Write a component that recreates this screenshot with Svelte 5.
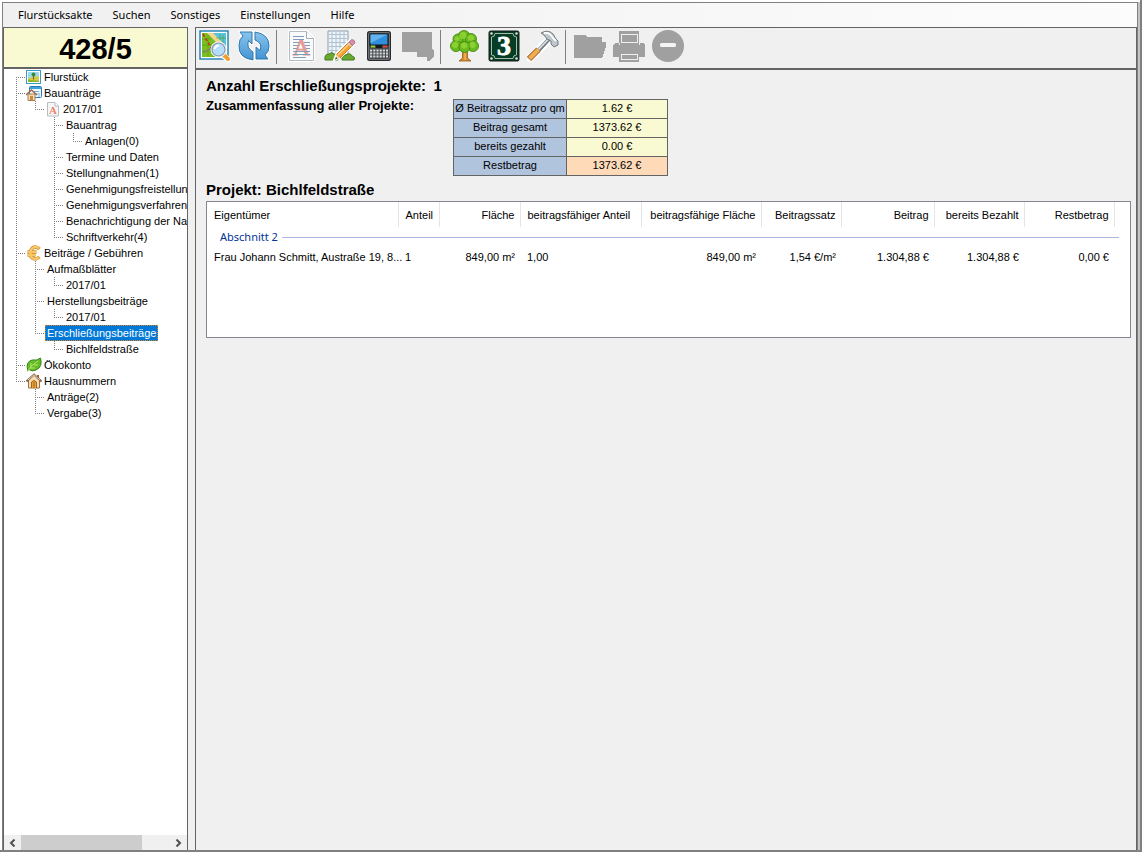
<script>
  const menu = ['Flurstücksakte', 'Suchen', 'Sonstiges', 'Einstellungen', 'Hilfe'];

  const tools = [
    [['map', 'Karte'], ['refresh', 'Aktualisieren']],
    [['doc', 'Dokument'], ['edit', 'Bearbeiten'], ['phone', 'Rechner'], ['note', 'Notiz', true]],
    [['tree', 'Ökokonto'], ['three', 'Hausnummer'], ['hammer', 'Werkzeug']],
    [['folder', 'Ordner', true], ['printer', 'Drucken', true], ['minus', 'Entfernen', true]]
  ];

  // Guides, one letter per level: "|" passes through, "t" branches, "l" ends, "-" is empty, "r" is the first root
  const nodes = [
    { g: 'r', text: 'Flurstück', icon: 'picture' },
    { g: 't', text: 'Bauanträge', icon: 'site' },
    { g: '|l', text: '2017/01', icon: 'page' },
    { g: '|-t', text: 'Bauantrag' },
    { g: '|-|l', text: 'Anlagen(0)' },
    { g: '|-t', text: 'Termine und Daten' },
    { g: '|-t', text: 'Stellungnahmen(1)' },
    { g: '|-t', text: 'Genehmigungsfreistellung' },
    { g: '|-t', text: 'Genehmigungsverfahren(1)' },
    { g: '|-t', text: 'Benachrichtigung der Nachbarn' },
    { g: '|-l', text: 'Schriftverkehr(4)' },
    { g: 't', text: 'Beiträge / Gebühren', icon: 'euro' },
    { g: '|t', text: 'Aufmaßblätter' },
    { g: '||l', text: '2017/01' },
    { g: '|t', text: 'Herstellungsbeiträge' },
    { g: '||l', text: '2017/01' },
    { g: '|l', text: 'Erschließungsbeiträge' },
    { g: '|-l', text: 'Bichlfeldstraße' },
    { g: 't', text: 'Ökokonto', icon: 'leaf' },
    { g: 'l', text: 'Hausnummern', icon: 'house' },
    { g: '-t', text: 'Anträge(2)' },
    { g: '-l', text: 'Vergabe(3)' }
  ];
  let selected = $state(16);

  const guide = {
    '|': 'M.5 0V16',
    t: 'M.5 0V16M0 8.5H10',
    l: 'M.5 0V8M0 8.5H10',
    r: 'M.5 8V16M0 8.5H10',
    '-': ''
  };

  const summary = [
    ['Ø Beitragssatz pro qm', '1.62 €'],
    ['Beitrag gesamt', '1373.62 €'],
    ['bereits gezahlt', '0.00 €'],
    ['Restbetrag', '1373.62 €']
  ];

  const columns = [
    ['Eigentümer', 191], ['Anteil', 41], ['Fläche', 81, true], ['beitragsfähiger Anteil', 121],
    ['beitragsfähige Fläche', 120, true], ['Beitragssatz', 80, true], ['Beitrag', 93, true],
    ['bereits Bezahlt', 90, true], ['Restbetrag', 90, true]
  ];
  const row = ['Frau Johann Schmitt, Austraße 19, 8...', '1', '849,00 m²', '1,00', '849,00 m²', '1,54 €/m²', '1.304,88 €', '1.304,88 €', '0,00 €'];
</script>

{#snippet toolIcon(name)}
  <svg width="32" height="32" viewBox="0 0 32 32" aria-hidden="true">
    {#if name === 'map'}
      <rect x="1" y="1" width="28" height="28" fill="#fff" stroke="#1b7fb5" stroke-width="1.4" />
      <rect x="3" y="3" width="24" height="24" fill="#7bbf1e" />
      <path d="M13 3H27V20L22 14Z" fill="#55c4dc" />
      <path d="M8 3H14L27 16V22Z" fill="#f3d58f" />
      <path d="M3 9H12M3 15H18M3 21H20M9 5V27M15 12V27M21 4V10M17 8H27M24 5V14" stroke="#4d9a1a" stroke-width=".8" opacity=".7" />
      <path d="M4 4L13 19" stroke="#d22" stroke-width="1.6" stroke-dasharray="3 2" />
      <path d="M4 23L14 17" stroke="#8b7b88" stroke-width="1.2" />
      <path d="M25 26L30 30" stroke="#fff" stroke-width="6" stroke-linecap="round" />
      <path d="M23 24L26 27" stroke="#778" stroke-width="2.5" />
      <path d="M26 26L29 29" stroke="#f0a030" stroke-width="4" stroke-linecap="round" />
      <circle cx="19.500" cy="19.500" r="6.500" fill="#bfe3fa" stroke="#f4f8fb" stroke-width="3" />
      <circle cx="19.500" cy="19.500" r="6.500" fill="#b5dcf8" stroke="#8597a8" stroke-width="1.2" />
      <path d="M15.500 19Q16.500 15.500 20 15.500" fill="none" stroke="#fff" stroke-width="2" />
    {:else if name === 'refresh'}
      <defs>
        <linearGradient id="blue" x2="0" y2="1"><stop stop-color="#89c5ec" /><stop offset="1" stop-color="#4494d3" /></linearGradient>
      </defs>
      <g stroke="#fff" stroke-width="3" stroke-linejoin="round">
        <path d="M2 2H14V14L10.500 10.500Q8 18 15 22V30Q0 28 1 15Q1 9 5 6Z" />
        <path d="M17 2Q31 4 31 16Q31 22 27 25L30 29H18V17L22 20.500Q25 13 17 10Z" />
      </g>
      <g fill="url(#blue)" stroke="#2f78b0" stroke-width="1" stroke-linejoin="round">
        <path d="M2 2H14V14L10.500 10.500Q8 18 15 22V30Q0 28 1 15Q1 9 5 6Z" />
        <path d="M17 2Q31 4 31 16Q31 22 27 25L30 29H18V17L22 20.500Q25 13 17 10Z" />
      </g>
    {:else if name === 'doc'}
      <path d="M4 1H22L29 8V31H4Z" fill="#fff" stroke="#fff" stroke-width="2" />
      <path d="M4.500 1.500H21.500L28.500 8.500V30.500H4.500Z" fill="#f8fafb" stroke="#b4bcc2" />
      <path d="M21.500 1.500V8.500H28.500" fill="#fff" stroke="#a4afb7" />
      <text x="16.500" y="25" text-anchor="middle" font-family="Liberation Serif, serif" font-size="24" fill="#e59a94" stroke="#e59a94" stroke-width=".8">A</text>
      <path d="M8 6.500H19M8 9.500H19M8 12.500H14M19 12.500H25M8 15.500H13M20 15.500H25M8 18.500H12M21 18.500H25M8 21.500H25M8 24.500H25M8 27.500H21" stroke="#7f9cb8" stroke-width="1.2" />
    {:else if name === 'edit'}
      <path d="M4 1H24V28H4Z" fill="#edf3f7" stroke="#8d9faf" />
      <path d="M8 2V27M12 2V27M16 2V27M20 2V27M5 4.500H23M5 8.500H23M5 12.500H23M5 16.500H23M5 20.500H23M5 24.500H23" stroke="#a9bdcb" stroke-width=".9" />
      <path d="M1 30Q0 24 5 24Q8 21 10 24Q14 24 14 30ZM18 30Q18 25 22 25Q26 22 28 26Q32 27 30 30Z" fill="#69a931" stroke="#457b1c" />
      <path d="M10 30L12.500 23.500L26 10L30 14L16.500 27.500Z" fill="#fff" stroke="#fff" stroke-width="2" />
      <path d="M12.500 24.500L25 12L28.500 15.500L16 28Z" fill="#f7a12c" stroke="#b96d16" stroke-width=".8" />
      <path d="M14 25L26 13" stroke="#ffd58d" stroke-width="1.3" />
      <path d="M12.500 24.500L11 29.500L16 28Z" fill="#f7dfb2" /><path d="M11 29.500L12 27L13.500 28.500Z" fill="#333" />
      <path d="M25 12L27.500 9.500Q31 9.500 31 13L28.500 15.500Z" fill="#dc8aac" stroke="#a46783" stroke-width=".7" />
      <path d="M24 13L27.500 16.500" stroke="#c8cbd0" stroke-width="1.3" />
    {:else if name === 'phone'}
      <rect x="4" y="1" width="24" height="30" rx="2.500" fill="#27292c" />
      <rect x="5.500" y="2.500" width="21" height="27" rx="1.500" fill="#484b4e" stroke="#96999b" stroke-width=".6" />
      <rect x="7" y="4" width="18" height="11" fill="#2f8fdc" stroke="#111" />
      <path d="M7.500 4.500H24.500L7.500 13Z" fill="#62b2ee" />
      <path d="M8 16.500H12" stroke="#8bd321" stroke-width="2" /><path d="M20 16.500H24" stroke="#ef3d31" stroke-width="2" />
      <rect x="13" y="15" width="6" height="3" fill="#15181b" />
      <path d="M7 20.500H25M7 23.500H25M7 26.500H25" stroke="#d5d6d7" stroke-width="1.800" stroke-dasharray="2.200 1" />
    {:else if name === 'note'}
      <path d="M0 2H30V19L32 21V26L27 31H25V27H15V22H0Z" fill="#a0a0a0" shape-rendering="crispEdges" />
    {:else if name === 'tree'}
      <path d="M10 31L13.500 28V20L9 15H23L18.500 20V28L22 31Z" fill="#d88b2c" stroke="#9b5917" stroke-width=".8" />
      <path d="M16 30V20M16 23L12 18M16 22L20 18" stroke="#ffc870" stroke-width="1" />
      <g fill="#6abb20" stroke="#45890f" stroke-width=".9">
        <circle cx="15" cy="6.500" r="6" /><circle cx="9" cy="9" r="5" /><circle cx="22" cy="9" r="5.500" />
        <circle cx="7" cy="16" r="5.500" /><circle cx="24" cy="16" r="5.500" /><circle cx="15.500" cy="17" r="5.500" />
      </g>
      <g fill="#99d839" opacity=".75"><circle cx="14" cy="5.500" r="3.500" /><circle cx="8" cy="9" r="2.500" /><circle cx="22" cy="8" r="3" /><circle cx="6" cy="15" r="3" /><circle cx="15" cy="15.500" r="3" /><circle cx="23.500" cy="15" r="3" /></g>
    {:else if name === 'three'}
      <rect x="1" y="1" width="30" height="30" rx="1.500" fill="#073d25" stroke="#171d18" />
      <path d="M7 3.500H25M28.500 7V25M25 28.500H7M3.500 25V7M3.500 7Q7 7 7 3.500M25 3.500Q25 7 28.500 7M28.500 25Q25 25 25 28.500M7 28.500Q7 25 3.500 25" fill="none" stroke="#b5c9ba" stroke-width=".9" />
      <g fill="#deddd1"><circle cx="3.500" cy="3.500" r="1.300" /><circle cx="28.500" cy="3.500" r="1.300" /><circle cx="3.500" cy="28.500" r="1.300" /><circle cx="28.500" cy="28.500" r="1.300" /></g>
      <text x="16" y="25" text-anchor="middle" font-family="Liberation Serif, serif" font-size="28" font-weight="bold" fill="#fff" stroke="#fff" stroke-width=".8">3</text>
    {:else if name === 'hammer'}
      <path d="M3 28L22 10" stroke="#fff" stroke-width="8" stroke-linecap="round" />
      <path d="M11 21L23 8" stroke="#70777d" stroke-width="4" />
      <path d="M11 20L23 7.500" stroke="#dce3e8" stroke-width="1.800" />
      <path d="M2 29L11.500 19.500" stroke="#a45b18" stroke-width="6" />
      <path d="M2.500 28.500L11.500 19.500" stroke="#efad58" stroke-width="4" />
      <path d="M14 3Q21 -1 26 4L29 9L31 11V15L27 17L24 14V11L20 9Q17 4 14 3Z" fill="#bdc7ce" stroke="#707980" />
      <path d="M17 3Q23 2 26 8L29 11" fill="none" stroke="#fff" stroke-width="1.800" />
    {:else if name === 'folder'}
      <path d="M0 5H11L13 7H28V12H32V17L28 28H0Z" fill="#a0a0a0" shape-rendering="crispEdges" />
    {:else if name === 'printer'}
      <path d="M6 1H26V13H30L32 15V27H26V32H6V27H0V15L2 13H6Z" fill="#a0a0a0" shape-rendering="crispEdges" />
      <path d="M8 4H24V12H8ZM8 24H24V29H8ZM6 13V15M26 13V15" fill="none" stroke="#f0f0f0" shape-rendering="crispEdges" />
    {:else}
      <circle cx="16" cy="16" r="16" fill="#a0a0a0" /><rect x="8" y="13" width="16" height="4" rx="1.500" fill="#f5f5f5" />
    {/if}
  </svg>
{/snippet}

{#snippet nodeIcon(name)}
  <svg class="node-icon" width="16" height="16" viewBox="0 0 16 16" aria-hidden="true">
    {#if name === 'picture'}
      <rect x=".5" y="1.500" width="14" height="13" fill="#fff" stroke="#389bc7" />
      <rect x="2" y="3" width="11" height="7" fill="#9bd8ef" /><path d="M2 9L13 7V13H2Z" fill="#d5cc43" /><path d="M2 10.500L13 12V13H2Z" fill="#8ab82c" />
      <path d="M7.500 6V10.500" stroke="#865d25" stroke-width="1.200" /><circle cx="7.500" cy="5.500" r="2" fill="#398b2e" />
    {:else if name === 'site'}
      <rect x="3.500" y="1.500" width="12" height="11" rx="1" fill="#f1f9fe" stroke="#247bb7" />
      <path d="M4 3H15" stroke="#3ba2df" stroke-width="2" /><path d="M7 6.500H13M10 9H14M12 11H14" stroke="#6bb5e4" />
      <path d="M2 9H9V15.500H2Z" fill="#f5dcb0" stroke="#a98054" /><path d="M0 10L5.500 5L11 10" fill="none" stroke="#a5673f" stroke-width="1.500" /><path d="M4 11H7V15H4Z" fill="#c98b48" />
    {:else if name === 'page'}
      <path d="M2.500 1.500H10L13.500 5V15H2.500Z" fill="#f5f6f7" stroke="#b7bdc2" /><path d="M10 1.500V5H13.500" fill="#fff" stroke="#b7bdc2" />
      <text x="8" y="13" text-anchor="middle" font-family="Liberation Serif, serif" font-weight="bold" font-size="11" fill="#f18165">A</text>
    {:else if name === 'euro'}
      <path d="M13.500 4Q11 1.500 8.500 2Q4.500 3 4.500 8.500Q4.500 13.500 9 14Q11 14 13.500 12M1.500 7H10.500M1.500 10H9.500" fill="none" stroke="#cf9432" stroke-width="3.500" />
      <path d="M13 3.500Q11 1.500 8.500 2Q4.500 3 4.500 8.500Q4.500 13.500 9 14Q11 14 13 12.500M2 7H10M2 10H9" fill="none" stroke="#fac866" stroke-width="2.200" />
    {:else if name === 'leaf'}
      <path d="M2 14Q-1 5 6 3Q11 4 14.500 1Q17 10 10 13Q6 15 3 12.500" fill="#66bb29" stroke="#32871a" /><path d="M1 15Q4 9 12 4M5 10V6M8 8H12M4 11H9" fill="none" stroke="#b4e86a" />
    {:else}
      <path d="M2.500 7V15H13.500V7L8 2Z" fill="#f7ddb0" stroke="#987246" /><path d="M11 2H13V6H11Z" fill="#ae5c30" /><path d="M.5 8.500L8 1.500L15.500 8.500" fill="none" stroke="#88664c" stroke-width="2" /><path d="M2 7L8 1.800L14 7" fill="none" stroke="#ddd2bd" /><path d="M5.500 15V9Q8 6 10.500 9V15" fill="#e6a33a" stroke="#a4621e" /><path d="M8 9V15" stroke="#a4621e" />
    {/if}
  </svg>
{/snippet}

<div class="window">
  <div class="client">
    <nav class="menu" aria-label="Hauptmenü">
      {#each menu as item}<button>{item}</button>{/each}
    </nav>
    <div class="body">
      <aside>
        <h1>428/5</h1>
        <ul class="tree">
          {#each nodes as node, i}
            <li>
              {#each node.g as part, level}
                <svg class="guide" width={level === node.g.length - 1 ? 10 : 19} height="16" aria-hidden="true">
                  <path d={guide[part]} />
                </svg>
              {/each}
              {#if node.icon}{@render nodeIcon(node.icon)}{/if}
              <button class:selected={selected === i} onclick={() => (selected = i)}>{node.text}</button>
            </li>
          {/each}
        </ul>
        <div class="scrollbar">
          <button aria-label="Nach links"><svg width="7" height="8" viewBox="0 0 7 8"><path d="M5.500 .5L2 4L5.500 7.500" /></svg></button>
          <div class="track"><div class="thumb"></div></div>
          <button aria-label="Nach rechts"><svg width="7" height="8" viewBox="0 0 7 8"><path d="M1.500 .5L5 4L1.500 7.500" /></svg></button>
        </div>
      </aside>
      <main>
        <div class="toolbar" role="toolbar">
          {#each tools as group}
            <div class="group">
              {#each group as [name, label, disabled]}
                <button aria-label={label} {disabled}>{@render toolIcon(name)}</button>
              {/each}
            </div>
          {/each}
        </div>
        <div class="content">
          <h2>Anzahl Erschließungsprojekte:&ensp;1</h2>
          <div class="summary">
            <h3>Zusammenfassung aller Projekte:</h3>
            <table>
              <tbody>
                {#each summary as [label, value]}
                  <tr><th scope="row">{label}</th><td>{value}</td></tr>
                {/each}
              </tbody>
            </table>
          </div>
          <h2>Projekt: Bichlfeldstraße</h2>
          <div class="list">
            <table>
              <colgroup>
                {#each columns as [, width]}<col style:width="{width}px" />{/each}
                <col />
              </colgroup>
              <thead>
                <tr>
                  {#each columns as [label, , right]}<th scope="col" class:right>{label}</th>{/each}
                  <td></td>
                </tr>
              </thead>
              <tbody>
                <tr><td class="section" colspan="10"><div>Abschnitt 2</div></td></tr>
                <tr>
                  {#each row as value, i}<td class:right={columns[i][2]}>{value}</td>{/each}
                  <td></td>
                </tr>
              </tbody>
            </table>
          </div>
        </div>
      </main>
    </div>
  </div>
</div>

<style>
  :global(body) { margin: 0; background: #fff; }
  * { box-sizing: border-box; }
  button { margin: 0; padding: 0; border: 0; background: none; color: inherit; font: inherit; white-space: nowrap; }
  svg { display: block; flex: none; }
  h1, h2, h3, ul { margin: 0; padding: 0; }
  table { border-collapse: collapse; }

  .window {
    min-height: 100vh;
    padding: 2px 0 0 2px;
    display: flex;
    border-right: 2px solid #808080;
    border-bottom: 2px solid #808080;
    font: 11px/16px "Liberation Sans", Arial, sans-serif;
    color: #000;
  }
  .client {
    flex: 1;
    min-width: 0;
    display: flex;
    flex-direction: column;
    border-top: 1px solid #808080;
    border-left: 1px solid #808080;
    border-right: 1px solid #808080;
    box-shadow: 2px 0 #c4c4c4;
    margin-right: 2px;
    background: #f0f0f0;
  }
  .menu {
    height: 24px;
    padding-left: 15px;
    display: flex;
    align-items: center;
    gap: 20px;
    background: linear-gradient(90deg, #f0f0f0, #fcfcfc);
    font-family: "Noto Sans", "Open Sans", sans-serif;
  }
  .body { flex: 1; min-height: 0; display: flex; gap: 7px; }
  aside {
    width: 185px;
    flex: none;
    display: flex;
    flex-direction: column;
    border: 1px solid #646464;
    border-bottom: 0;
    background: #fff;
  }
  h1 {
    height: 41px;
    border-bottom: 2px solid #646464;
    background: #fafad2;
    text-align: center;
    font-size: 29px;
    line-height: 42px;
  }
  .tree { flex: 1; padding-left: 12px; overflow: hidden; list-style: none; }
  .tree li { display: flex; height: 16px; }
  .tree button { padding: 0 2px; outline-offset: -1px; }
  .tree .selected { background: #0078d7; color: #fff; outline: 1px dotted #e08020; }
  .guide path { fill: none; stroke: #808080; stroke-dasharray: 1 1; shape-rendering: crispEdges; }
  .scrollbar { display: flex; height: 15px; background: #f0f0f0; }
  .scrollbar button { width: 17px; display: grid; place-items: center; }
  .scrollbar path { fill: none; stroke: #505050; stroke-width: 2; }
  .track { flex: 1; }
  .thumb { width: 81%; height: 100%; background: #cdcdcd; }

  main {
    flex: 1;
    min-width: 0;
    border: 1px solid #646464;
    border-bottom: 0;
  }
  .toolbar {
    display: flex;
    height: 42px;
    padding: 2px 3px 0;
    border-bottom: 2px solid #646464;
  }
  .group { display: flex; gap: 7px; height: 34px; }
  .group + .group { margin-left: 6px; padding-left: 8px; border-left: 1px solid #808080; }
  .group button { width: 32px; height: 32px; }
  .content { padding: 6px 5px 0 10px; }
  h2 { font-size: 15px; line-height: 20px; }
  h3 { font-size: 13px; line-height: 20px; }
  .summary { display: flex; margin-bottom: 4px; }
  .summary h3 { width: 247px; }
  .summary table { margin-top: 3px; text-align: center; }
  .summary th, .summary td { height: 19px; padding: 0 0 2px; border: 1px solid #646464; }
  .summary th { width: 113px; background: #b0c4de; font-weight: normal; }
  .summary td { width: 101px; background: #fafad2; }
  .summary tr:last-child td { background: #ffdab9; }
  .list { min-height: 137px; margin-top: 1px; border: 1px solid #828790; background: #fff; }
  .list table { width: 100%; table-layout: fixed; }
  .list th, .list td {
    height: 25px;
    padding: 0 5px 0 7px;
    text-align: left;
    white-space: nowrap;
    font-weight: normal;
  }
  .list th { border-right: 1px solid #e5e5e5; }
  .list .right { text-align: right; }
  .list tbody td { height: 20px; }
  .list tbody .section { padding: 0 11px 0 13px; }
  .section div {
    display: flex;
    align-items: center;
    gap: 4px;
    color: #003399;
    font-family: "Noto Sans", "Open Sans", sans-serif;
  }
  .section div::after { content: ""; flex: 1; height: 1px; background: #aab8e0; }
</style>
